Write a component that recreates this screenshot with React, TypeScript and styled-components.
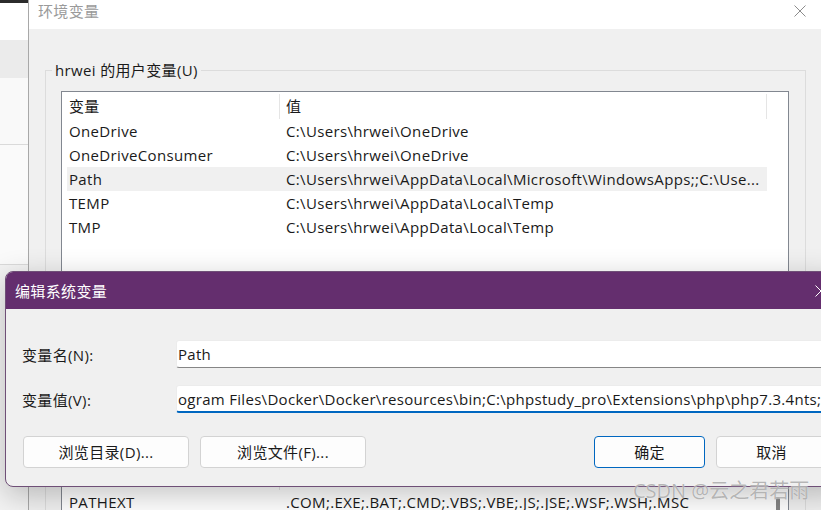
import styled, { createGlobalStyle } from 'styled-components';

const GlobalStyle = createGlobalStyle`
  html, body {
    margin: 0;
    padding: 0;
  }
  body {
    width: 821px;
    height: 510px;
    overflow: hidden;
    background: #f0f0f0;
    font-family: 'Open Sans', 'Noto Sans CJK SC', sans-serif;
    font-size: 15px;
    letter-spacing: 0.35px;
    color: #1a1a1a;
  }
  * {
    box-sizing: border-box;
  }
`;

interface VarRow {
  name: string;
  value: string;
  selected?: boolean;
}

const userVars: VarRow[] = [
  { name: 'OneDrive', value: String.raw`C:\Users\hrwei\OneDrive` },
  { name: 'OneDriveConsumer', value: String.raw`C:\Users\hrwei\OneDrive` },
  {
    name: 'Path',
    value: String.raw`C:\Users\hrwei\AppData\Local\Microsoft\WindowsApps;;C:\Use...`,
    selected: true,
  },
  { name: 'TEMP', value: String.raw`C:\Users\hrwei\AppData\Local\Temp` },
  { name: 'TMP', value: String.raw`C:\Users\hrwei\AppData\Local\Temp` },
];

// the system list is scrolled so that PATHEXT is the first row under the header
const systemVars: VarRow[] = [
  { name: 'PATHEXT', value: '.COM;.EXE;.BAT;.CMD;.VBS;.VBE;.JS;.JSE;.WSF;.WSH;.MSC' },
  { name: 'PROCESSOR_ARCHITECTURE', value: 'AMD64' },
];

const pathValue = String.raw`ogram Files\Docker\Docker\resources\bin;C:\phpstudy_pro\Extensions\php\php7.3.4nts;`;

const CloseIcon = ({ color }: { color: string }) => (
  <svg width="12" height="12" viewBox="0 0 12 12">
    <path d="M0.5 0.5 L11.5 11.5 M11.5 0.5 L0.5 11.5" stroke={color} strokeWidth="1" fill="none" />
  </svg>
);

const VarList = ({
  rows,
  height,
  gap,
  scroll,
}: {
  rows: VarRow[];
  height: number;
  gap: number;
  scroll?: boolean;
}) => (
  <ListBox $h={height} $gap={gap}>
    <ListMain>
      <HeaderRow>
        <HeaderCell $w={218}>变量</HeaderCell>
        <HeaderCell $w={487}>值</HeaderCell>
      </HeaderRow>
      {rows.map((r) => (
        <Row key={r.name} $selected={r.selected}>
          <NameCell>{r.name}</NameCell>
          <ValueCell>{r.value}</ValueCell>
        </Row>
      ))}
    </ListMain>
    {scroll && (
      <ScrollTrack>
        <ScrollThumb />
      </ScrollTrack>
    )}
  </ListBox>
);

export default function App() {
  return (
    <>
      <GlobalStyle />
      <Desktop>
        <SideApp>
          <SideBand $h={3} $bg="#2b2b2b" />
          <SideBand $h={37} $bg="#ffffff" />
          <SideBand $h={38} $bg="#ebebeb" />
          <SideBand $h={67} $bg="#f9f9f9" $line />
          <SideBand $h={120} $bg="#fafafa" $line />
          <SideBand $h={245} $bg="#f3f3f3" />
        </SideApp>

        <BackWindow>
          <BackTitleBar>
            <span>环境变量</span>
            <CloseIcon color="#8c8c8c" />
          </BackTitleBar>
          <BackBody>
            <GroupBox $top={41}>
              <GroupTitle>hrwei 的用户变量(U)</GroupTitle>
              <VarList rows={userVars} height={304} gap={11} />
            </GroupBox>
            <GroupBox $top={16}>
              <GroupTitle>系统变量(S)</GroupTitle>
              <VarList rows={systemVars} height={200} gap={28} scroll />
            </GroupBox>
          </BackBody>
        </BackWindow>

        <EditDialog>
          <DialogTitleBar>
            <span>编辑系统变量</span>
            <CloseIcon color="#ffffff" />
          </DialogTitleBar>
          <DialogBody>
            <FieldGrid>
              <FieldLabel>变量名(N):</FieldLabel>
              <TextBox readOnly value="Path" />
              <FieldLabel>变量值(V):</FieldLabel>
              <TextBox readOnly value={pathValue} $focused />
            </FieldGrid>
            <ButtonRow>
              <DialogButton $w={166}>浏览目录(D)...</DialogButton>
              <DialogButton $w={166}>浏览文件(F)...</DialogButton>
              <Spacer />
              <DialogButton $w={111} $primary>
                确定
              </DialogButton>
              <DialogButton $w={111}>取消</DialogButton>
            </ButtonRow>
          </DialogBody>
        </EditDialog>

        <Watermark>CSDN @云之君若雨</Watermark>
      </Desktop>
    </>
  );
}

const Desktop = styled.div`
  position: relative;
  width: 821px;
  height: 510px;
  display: flex;
  overflow: hidden;
`;

const SideApp = styled.div`
  width: 29px;
  flex: none;
  display: flex;
  flex-direction: column;
  border-right: 1px solid #a8a8a8;
`;

const SideBand = styled.div<{ $h: number; $bg: string; $line?: boolean }>`
  height: ${({ $h }) => $h}px;
  flex: none;
  background: ${({ $bg }) => $bg};
  border-bottom: ${({ $line }) => ($line ? '1px solid #dadada' : 'none')};
`;

const BackWindow = styled.div`
  flex: 1;
  min-width: 0;
  display: flex;
  flex-direction: column;
  background: #f0f0f0;
`;

const BackTitleBar = styled.div`
  height: 29px;
  flex: none;
  display: flex;
  align-items: flex-start;
  justify-content: space-between;
  padding: 1px 15px 0 9px;
  background: #ffffff;
  color: #9a9a9a;
  line-height: 20px;

  svg {
    margin-top: 4px;
  }
`;

const BackBody = styled.div`
  display: flex;
  flex-direction: column;
`;

const GroupBox = styled.div<{ $top: number }>`
  margin: ${({ $top }) => $top}px 15px 0 16px;
  border: 1px solid #dcdcdc;
  padding: 0 16px 12px 15px;
  display: flex;
  flex-direction: column;
`;

const GroupTitle = styled.div`
  align-self: flex-start;
  margin: -11px 0 0 -9px;
  padding: 0 3px;
  background: #f0f0f0;
  line-height: 20px;
  color: #1a1a1a;
`;

const ListBox = styled.div<{ $h: number; $gap: number }>`
  margin-top: ${({ $gap }) => $gap}px;
  height: ${({ $h }) => $h}px;
  border: 1px solid #828790;
  background: #ffffff;
  display: flex;
  overflow: hidden;
`;

const ListMain = styled.div`
  flex: 1;
  min-width: 0;
  display: flex;
  flex-direction: column;
`;

const HeaderRow = styled.div`
  height: 27px;
  flex: none;
  display: flex;
  align-items: flex-start;
  padding-top: 2px;
`;

const HeaderCell = styled.div<{ $w: number }>`
  width: ${({ $w }) => $w}px;
  height: 25px;
  line-height: 25px;
  padding-left: 6px;
  border-right: 1px solid #e5e5e5;
  flex: none;
  &:first-child {
    padding-left: 7px;
  }
`;

const Row = styled.div<{ $selected?: boolean }>`
  height: 24px;
  flex: none;
  width: 700px;
  margin-left: 5px;
  display: grid;
  grid-template-columns: 212px 488px;
  line-height: 24px;
  background: ${({ $selected }) => ($selected ? '#f0f0f0' : 'transparent')};
`;

const NameCell = styled.div`
  padding-left: 2px;
  white-space: nowrap;
  overflow: hidden;
`;

const ValueCell = styled.div`
  padding-left: 7px;
  white-space: nowrap;
  overflow: hidden;
`;

const ScrollTrack = styled.div`
  width: 13px;
  flex: none;
  padding: 34px 0 0 1px;
`;

const ScrollThumb = styled.div`
  width: 4px;
  height: 90px;
  border-radius: 2px;
  background: #858585;
`;

const EditDialog = styled.div`
  position: absolute;
  left: 5px;
  top: 271px;
  width: 840px;
  display: flex;
  flex-direction: column;
  background: #f0f0f0;
  border: 1px solid #6f4f77;
  border-radius: 8px 0 0 8px;
  box-shadow: 0 8px 30px rgba(0, 0, 0, 0.24);
  overflow: hidden;
`;

const DialogTitleBar = styled.div`
  height: 37px;
  display: flex;
  align-items: center;
  justify-content: space-between;
  padding: 0 17px 0 9px;
  background: #642e6e;
  color: #ffffff;
  line-height: 20px;
`;

const DialogBody = styled.div`
  padding: 31px 17px 18px 16px;
  display: flex;
  flex-direction: column;
`;

const FieldGrid = styled.div`
  display: grid;
  grid-template-columns: 154px 1fr;
  row-gap: 17px;
  align-items: center;
`;

const FieldLabel = styled.div`
  line-height: 20px;
  margin-top: 1px;
`;

const TextBox = styled.input<{ $focused?: boolean }>`
  height: 28px;
  width: 100%;
  padding: 0 1px;
  margin: 0;
  font: inherit;
  letter-spacing: 0.3px;
  color: #1a1a1a;
  background: #ffffff;
  border: 1px solid #ececec;
  border-bottom: ${({ $focused }) => ($focused ? '2px solid #0067c0' : '1px solid #868686')};
  border-radius: 3px 0 0 3px;
  outline: none;
`;

const ButtonRow = styled.div`
  margin-top: 23px;
  display: flex;
  gap: 12px;
  padding-left: 1px;
`;

const Spacer = styled.div`
  flex: 1;
`;

const DialogButton = styled.div<{ $w: number; $primary?: boolean }>`
  width: ${({ $w }) => $w}px;
  height: 32px;
  flex: none;
  display: flex;
  align-items: center;
  justify-content: center;
  line-height: 20px;
  background: #fdfdfd;
  border: 1px solid ${({ $primary }) => ($primary ? '#0067c0' : '#d3d3d3')};
  border-radius: 4px;
  & + & {
    margin-left: -1px;
  }
`;

const Watermark = styled.div`
  position: absolute;
  left: 633px;
  top: 479px;
  font-size: 20px;
  line-height: 24px;
  letter-spacing: 0;
  color: rgba(150, 150, 150, 0.7);
  text-shadow: 0 0 1px rgba(255, 255, 255, 0.9);
  white-space: nowrap;
`;
